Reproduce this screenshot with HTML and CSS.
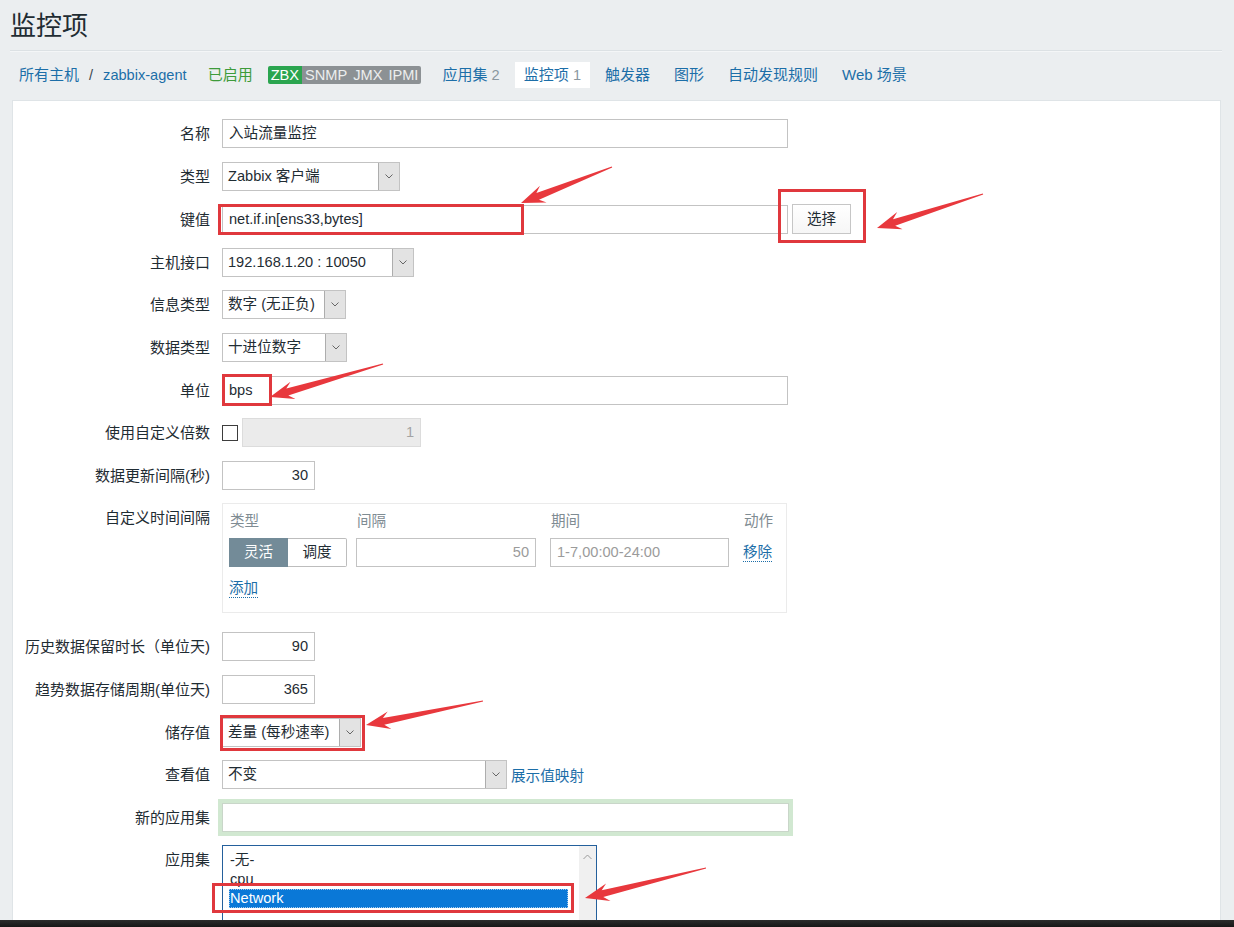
FILE: index.html
```html
<!DOCTYPE html>
<html lang="zh-CN">
<head>
<meta charset="utf-8">
<title>监控项</title>
<link rel="stylesheet" href="styles.css">
</head>
<body>
<div class="page">
  <header class="page-header"><h1>监控项</h1></header>
  <nav class="tabs">
    <div class="crumbs"><a class="link">所有主机</a><span class="sep">/</span><a class="link latin">zabbix-agent</a></div>
    <span class="status-on">已启用</span>
    <div class="badges"><span class="badge on">ZBX</span><span class="badge">SNMP</span><span class="badge">JMX</span><span class="badge">IPMI</span></div>
    <a class="tab first">应用集 <span class="count">2</span></a>
    <span class="tab active">监控项 <span class="count">1</span></span>
    <a class="tab">触发器</a>
    <a class="tab">图形</a>
    <a class="tab">自动发现规则</a>
    <a class="tab">Web 场景</a>
  </nav>
  <main class="panel">
    <div class="form">
      <div class="lbl">名称</div>
      <div class="fld"><div class="inp w566">入站流量监控</div></div>

      <div class="lbl">类型</div>
      <div class="fld"><div class="sel w178"><span class="v">Zabbix 客户端</span><span class="a"><svg width="8" height="5" viewBox="0 0 8 5"><path d="M0.5 0.5 L4 4 L7.5 0.5" fill="none" stroke="#666" stroke-width="1"/></svg></span></div></div>

      <div class="lbl">键值</div>
      <div class="fld row"><div class="inp w566">net.if.in[ens33,bytes]</div><div class="btn">选择</div></div>

      <div class="lbl">主机接口</div>
      <div class="fld"><div class="sel w192"><span class="v">192.168.1.20 : 10050</span><span class="a"><svg width="8" height="5" viewBox="0 0 8 5"><path d="M0.5 0.5 L4 4 L7.5 0.5" fill="none" stroke="#666" stroke-width="1"/></svg></span></div></div>

      <div class="lbl">信息类型</div>
      <div class="fld"><div class="sel w124"><span class="v">数字 (无正负)</span><span class="a"><svg width="8" height="5" viewBox="0 0 8 5"><path d="M0.5 0.5 L4 4 L7.5 0.5" fill="none" stroke="#666" stroke-width="1"/></svg></span></div></div>

      <div class="lbl">数据类型</div>
      <div class="fld"><div class="sel w125"><span class="v">十进位数字</span><span class="a"><svg width="8" height="5" viewBox="0 0 8 5"><path d="M0.5 0.5 L4 4 L7.5 0.5" fill="none" stroke="#666" stroke-width="1"/></svg></span></div></div>

      <div class="lbl">单位</div>
      <div class="fld"><div class="inp w566">bps</div></div>

      <div class="lbl">使用自定义倍数</div>
      <div class="fld row"><span class="check"></span><div class="inp w179 disabled num">1</div></div>

      <div class="lbl">数据更新间隔(秒)</div>
      <div class="fld"><div class="inp w93 num">30</div></div>

      <div class="lbl top">自定义时间间隔</div>
      <div class="fld intervals">
        <div class="int-grid">
          <span class="th">类型</span><span class="th">间隔</span><span class="th">期间</span><span class="th">动作</span>
          <div class="seg"><span class="on">灵活</span><span>调度</span></div>
          <div class="inp w180 num ph">50</div>
          <div class="inp w179 ph">1-7,00:00-24:00</div>
          <a class="dlink">移除</a>
          <a class="dlink add">添加</a>
        </div>
      </div>

      <div class="lbl">历史数据保留时长（单位天)</div>
      <div class="fld"><div class="inp w93 num">90</div></div>

      <div class="lbl">趋势数据存储周期(单位天)</div>
      <div class="fld"><div class="inp w93 num">365</div></div>

      <div class="lbl">储存值</div>
      <div class="fld"><div class="sel w139"><span class="v">差量 (每秒速率)</span><span class="a"><svg width="8" height="5" viewBox="0 0 8 5"><path d="M0.5 0.5 L4 4 L7.5 0.5" fill="none" stroke="#666" stroke-width="1"/></svg></span></div></div>

      <div class="lbl">查看值</div>
      <div class="fld row"><div class="sel w285"><span class="v">不变</span><span class="a"><svg width="8" height="5" viewBox="0 0 8 5"><path d="M0.5 0.5 L4 4 L7.5 0.5" fill="none" stroke="#666" stroke-width="1"/></svg></span></div><a class="link">展示值映射</a></div>

      <div class="lbl">新的应用集</div>
      <div class="fld"><div class="inp w567 glow"></div></div>

      <div class="lbl top">应用集</div>
      <div class="fld">
        <div class="listbox">
          <div class="opts">
            <div class="opt">-无-</div>
            <div class="opt">cpu</div>
            <div class="opt selected">Network</div>
          </div>
          <div class="scroll"><svg width="9" height="6" viewBox="0 0 9 6"><path d="M0.5 5 L4.5 1 L8.5 5" fill="none" stroke="#9a9a9a" stroke-width="1"/></svg></div>
        </div>
      </div>
    </div>
  </main>
</div>
<div class="taskbar"></div>
<svg class="annot" width="1234" height="927" viewBox="0 0 1234 927">
  <g fill="none" stroke="#e0383d" stroke-width="3">
    <rect x="219.5" y="205.5" width="303" height="28"/>
    <rect x="779.5" y="190.5" width="85" height="51"/>
    <rect x="223.5" y="375.5" width="47" height="29"/>
    <rect x="221.5" y="716.5" width="142" height="33"/>
    <rect x="213.5" y="884.5" width="359" height="27"/>
  </g>
  <g fill="#e8383d">
    <polygon points="521,203 540.0,185.8 536.4,193.1 611.8,166.4 612.2,167.6 539.0,199.7 546.6,202.6"/>
    <polygon points="877,228 897.2,212.1 893.0,219.2 982.8,193.4 983.2,194.6 895.2,225.8 902.6,229.3"/>
    <polygon points="270,397 290.5,381.7 286.3,388.6 382.8,363.4 383.2,364.6 288.3,395.4 295.5,398.9"/>
    <polygon points="366,725 387.7,711.4 382.9,718.0 482.9,700.4 483.1,701.6 384.3,724.8 391.3,729.0"/>
    <polygon points="585,898 606.1,883.5 601.7,890.3 705.9,867.4 706.1,868.6 603.3,897.1 610.5,900.9"/>
  </g>
</svg>
</body>
</html>
```

FILE: styles.css
```css
* { box-sizing: border-box; }

html, body {
  margin: 0;
  height: 927px;
  overflow: hidden;
}

body {
  position: relative;
  background: #ebeef0;
  font-family: "Liberation Sans", "Noto Sans CJK SC", sans-serif;
  font-size: 14.6px;
  color: #1f2c33;
}

.page {
  padding: 0 12px 0 10px;
}

.page-header {
  height: 51px;
  border-bottom: 1px solid #dce1e4;
  box-shadow: 0 1px 0 #f4f6f7;
}

.page-header h1 {
  margin: 0;
  font-weight: normal;
  font-size: 26px;
  line-height: 52px;
  color: #1f2c33;
}

.tabs {
  display: flex;
  align-items: stretch;
  height: 26px;
  line-height: 26px;
  margin-top: 11px;
  padding-left: 9px;
  white-space: nowrap;
  font-size: 15px;
}

.crumbs {
  display: flex;
  line-height: 26px;
}

.latin { font-size: 14.6px; }

.sep {
  margin: 0 10px;
  color: #3b4950;
  font-size: 14.6px;
}

.link, .tab, .dlink {
  color: #1c6ea8;
  text-decoration: none;
}

.status-on {
  color: #3d9b3a;
  margin-left: 21px;
}

.badges {
  display: flex;
  align-self: center;
  margin-left: 15px;
  height: 18px;
  border-radius: 2px;
  overflow: hidden;
  font-size: 14.6px;
}

.badge {
  background: #8c9194;
  color: #eceeee;
  padding: 0 3px;
  line-height: 18px;
}

.badge.on {
  background: #2aa54f;
  color: #ffffff;
}

.tab {
  padding: 0 9px;
  line-height: 26px;
  margin-left: 6px;
}

.tab.first { margin-left: 12px; }

.tab.active {
  background: #ffffff;
}

.count {
  color: #8a979f;
  font-size: 14.6px;
}

.panel {
  background: #ffffff;
  border: 1px solid #dfe4e7;
  margin: 12px 1px 0 2px;
  min-height: 840px;
  padding-top: 18px;
}

.form {
  display: grid;
  grid-template-columns: 197px auto;
  column-gap: 12px;
  row-gap: 13.6px;
  align-items: center;
  justify-items: start;
}

.lbl {
  justify-self: end;
  text-align: right;
  line-height: 29px;
  white-space: nowrap;
  font-size: 15px;
}

.lbl.top { align-self: start; }

.fld.row {
  display: flex;
  align-items: center;
  gap: 4px;
}

.inp {
  height: 29px;
  border: 1px solid #c3c3c3;
  background: #ffffff;
  padding: 0 6px;
  line-height: 27px;
  white-space: nowrap;
  overflow: hidden;
}

.inp.num { text-align: right; }
.inp.ph { color: #9b9b9b; }

.inp.disabled {
  background: #ebebeb;
  border-color: #dcdcdc;
  color: #a3a3a3;
}

.inp.glow {
  border-color: #c9d6c9;
  box-shadow: 0 0 0 4px #d1e8d1;
}

.w93 { width: 93px; }
.w124 { width: 124px; }
.w125 { width: 125px; }
.w139 { width: 139px; }
.w178 { width: 178px; }
.w179 { width: 179px; }
.w180 { width: 180px; }
.w192 { width: 192px; }
.w285 { width: 285px; }
.w566 { width: 566px; }
.w567 { width: 567px; }

.btn {
  width: 59px;
  height: 30px;
  border: 1px solid #c6c6c6;
  background: linear-gradient(#ffffff, #f6f6f6);
  text-align: center;
  line-height: 28px;
  color: #1f2c33;
}

.sel {
  display: flex;
  height: 29px;
  border: 1px solid #c3c3c3;
  background: #ffffff;
}

.sel .v {
  flex: 1;
  padding-left: 5px;
  line-height: 27px;
  white-space: nowrap;
  overflow: hidden;
}

.sel .a {
  width: 21px;
  background: #e3e3e3;
  border-left: 1px solid #adadad;
  display: flex;
  align-items: center;
  justify-content: center;
}

.check {
  width: 16px;
  height: 16px;
  border: 1px solid #3d3d3d;
  background: #ffffff;
}

.intervals {
  width: 565px;
  height: 110px;
  margin-bottom: 5.4px;
  border: 1px solid #ebebeb;
  padding: 7px 0 0 6px;
}

.int-grid {
  display: grid;
  grid-template-columns: 127px 194px 193px auto;
  grid-template-rows: 20px 29px 20px;
  row-gap: 7px;
  align-items: center;
}

.int-grid .add {
  grid-column: 1 / 2;
  justify-self: start;
  margin-top: 9px;
}

.th {
  color: #7f8c93;
  line-height: 20px;
  padding-left: 1px;
}

.seg {
  display: flex;
}

.seg span {
  width: 59px;
  height: 29px;
  line-height: 27px;
  text-align: center;
  border: 1px solid #bdbdbd;
  background: #ffffff;
}

.seg span.on {
  background: #738b98;
  border-color: #738b98;
  color: #ffffff;
}

.seg span:last-child {
  border-left: none;
  border-radius: 0 2px 2px 0;
}

.dlink {
  justify-self: start;
  border-bottom: 1px dotted #1c6ea8;
  line-height: 18px;
}

.listbox {
  display: flex;
  width: 375px;
  height: 100px;
  border: 1px solid #24609c;
  background: #ffffff;
}

.opts {
  flex: 1;
  padding: 5px 11px 0 6px;
}

.opt {
  line-height: 19px;
  height: 19px;
  padding-left: 1px;
  white-space: nowrap;
}

.opt.selected {
  background: #0a78d7;
  color: #ffffff;
  outline: 1px dotted #9fc8ee;
  outline-offset: -1px;
}

.scroll {
  width: 17px;
  background: #f0f0f0;
  display: flex;
  justify-content: center;
  padding-top: 8px;
}

.taskbar {
  position: fixed;
  left: 0;
  right: 0;
  bottom: 0;
  height: 7px;
  background: linear-gradient(#2c2c2c, #161616);
  z-index: 3;
}

.annot {
  position: absolute;
  left: 0;
  top: 0;
  z-index: 2;
  pointer-events: none;
}
```
